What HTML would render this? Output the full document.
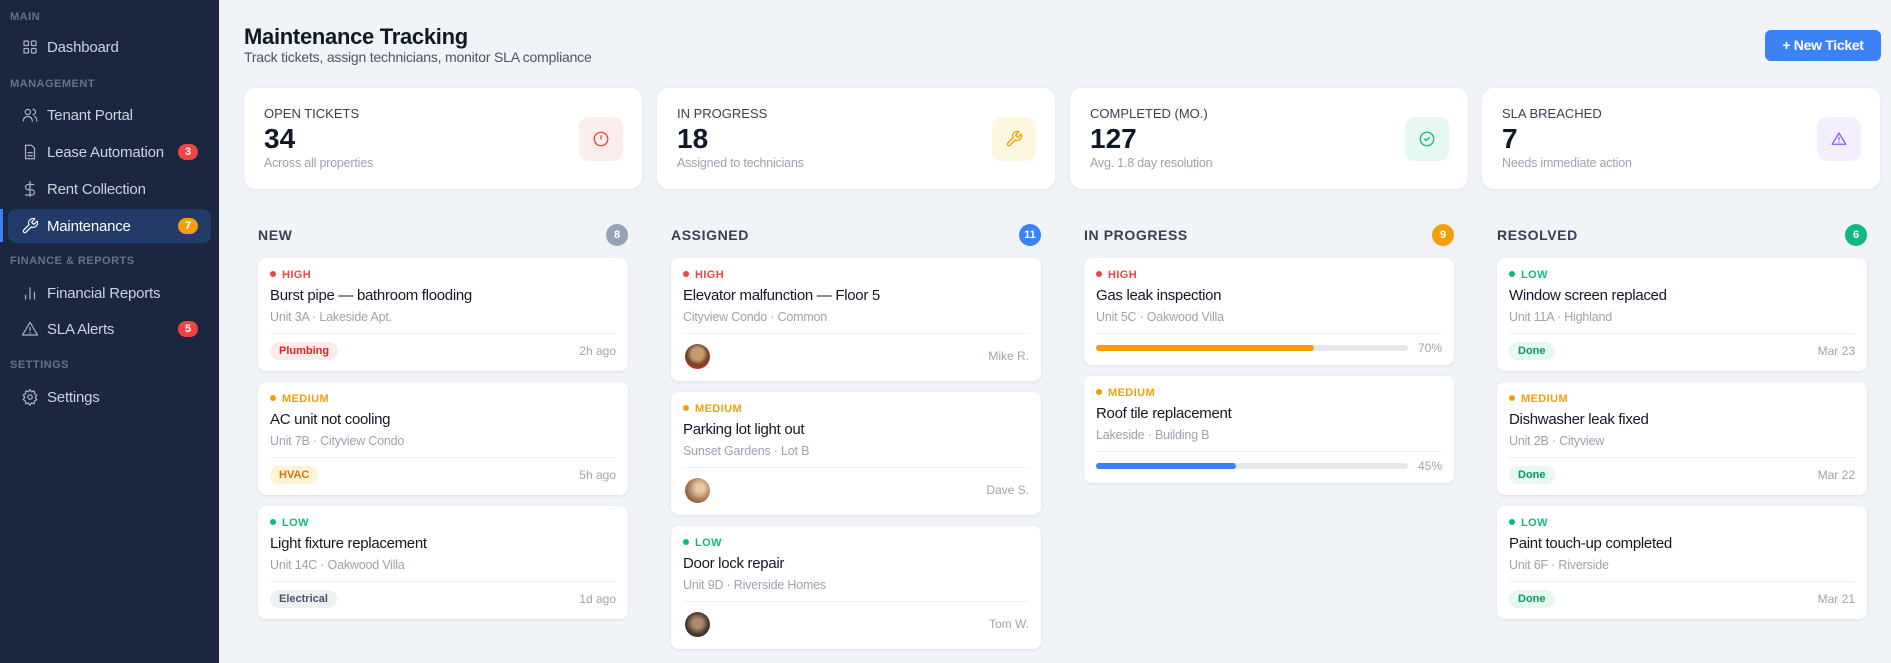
<!DOCTYPE html>
<html><head><meta charset="utf-8">
<style>
*{box-sizing:border-box;margin:0;padding:0}
body{width:1891px;height:663px;overflow:hidden;background:#f0f3f8;font-family:"Liberation Sans",sans-serif;position:relative}
.sb{position:absolute;left:0;top:0;width:219px;height:663px;background:#1b2641}
.sec{position:absolute;left:10px;font-size:11px;font-weight:bold;color:#66728c;letter-spacing:.5px}
.it{position:absolute;left:8px;width:203px;height:34px;display:flex;align-items:center;color:#cbd3e0;font-size:15px;border-radius:8px;letter-spacing:-.2px}
.it svg{position:absolute;left:13px;width:18px;height:18px;fill:none;stroke:#aab4c6;stroke-width:1.6;stroke-linecap:round;stroke-linejoin:round}
.it span{position:absolute;left:39px}
.it.act{background:#233b69;color:#fff}
.it.act svg{stroke:#fff}
.bar{position:absolute;left:0;top:209px;width:3px;height:33px;background:#3b82f6}
.bd{position:absolute;right:13px;width:20px;height:16px;border-radius:8px;color:#fff;font-size:11px;font-weight:bold;text-align:center;line-height:16px}
h1{position:absolute;left:244px;top:24px;font-size:22px;color:#111827;font-weight:bold;letter-spacing:-.3px}
.subt{position:absolute;left:244px;top:49px;font-size:14px;color:#4b5563;letter-spacing:-.2px}
.btn{position:absolute;left:1765px;top:30px;width:116px;height:31px;background:#3b82f6;border-radius:6px;color:#fff;font-size:14px;font-weight:bold;text-align:center;line-height:31px;letter-spacing:-.3px}
.st{position:absolute;top:88px;width:398px;height:101px;background:#fff;border-radius:12px;box-shadow:0 1px 3px rgba(0,0,0,.06)}
.st .l{position:absolute;left:20px;top:18px;font-size:13px;color:#374151}
.st .n{position:absolute;left:20px;top:35px;font-size:28px;font-weight:bold;color:#111827}
.st .s{position:absolute;left:20px;top:68px;font-size:12.5px;color:#9ca3af;letter-spacing:-.2px}
.st .ic{position:absolute;right:19px;top:29px;width:44px;height:44px;border-radius:10px;display:flex;align-items:center;justify-content:center}
.st .ic svg{width:18px;height:18px;fill:none;stroke-width:1.8;stroke-linecap:round;stroke-linejoin:round}
.col{position:absolute;top:224px;width:370px}
.ch{height:22px;position:relative;margin-bottom:12px}
.ch b{position:absolute;left:0;top:3px;font-size:14px;color:#374151;letter-spacing:.6px}
.ch i{position:absolute;right:0;top:0;width:22px;height:22px;border-radius:11px;color:#fff;font-style:normal;font-size:11px;font-weight:bold;text-align:center;line-height:22px}
.cd{background:#fff;border-radius:8px;padding:10px 12px 3px;margin-bottom:11px;box-shadow:0 1px 3px rgba(0,0,0,.08)}
.pr{height:14px;line-height:14px;font-size:11px;font-weight:bold;letter-spacing:.4px}
.pr:before{content:"";display:inline-block;width:6px;height:6px;border-radius:3px;background:currentColor;margin-right:6px;vertical-align:1px}
.h{color:#ef4444}.m{color:#f59e0b}.lo{color:#10b981}
.t{margin-top:4px;line-height:20px;font-size:15px;color:#111827;letter-spacing:-.3px}
.u{margin-top:3px;line-height:16px;font-size:12.5px;color:#9ca3af;padding-bottom:8px;border-bottom:1px solid #eef0f3;letter-spacing:-.2px}
.f{height:34px;display:flex;align-items:center;justify-content:space-between;font-size:12px;color:#9ca3af}
.f.a{height:44px}
.f.p{height:28px}
.tg{padding:3px 9px;border-radius:10px;font-size:11px;font-weight:bold}
.av{width:25px;height:25px;border-radius:13px;margin-left:2px}
.tr{flex:1;height:6px;background:#e5e7eb;border-radius:3px;margin-right:10px;position:relative}
.tr div{position:absolute;left:0;top:0;height:6px;border-radius:3px}
</style></head><body>
<div class="sb">
<div class="sec" style="top:11px">MAIN</div>
<div class="it" style="top:30px"><svg viewBox="0 0 24 24"><rect x="4" y="4" width="6" height="6" rx="1"/><rect x="14" y="4" width="6" height="6" rx="1"/><rect x="4" y="14" width="6" height="6" rx="1"/><rect x="14" y="14" width="6" height="6" rx="1"/></svg><span>Dashboard</span></div>
<div class="sec" style="top:78px">MANAGEMENT</div>
<div class="it" style="top:98px"><svg viewBox="0 0 24 24"><circle cx="9" cy="8" r="3.5"/><path d="M3 20c0-4 3-6 6-6s6 2 6 6M16 4.5a3.5 3.5 0 0 1 0 7M18 14c2 .8 3 3 3 6"/></svg><span>Tenant Portal</span></div>
<div class="it" style="top:135px"><svg viewBox="0 0 24 24"><path d="M6 3h8l4 4v14H6z"/><path d="M9 13h6M9 17h6"/></svg><span>Lease Automation</span><div class="bd" style="background:#ef4444">3</div></div>
<div class="it" style="top:172px"><svg viewBox="0 0 24 24"><path d="M12 2v20M17 6H9.5a3.5 3.5 0 0 0 0 7h5a3.5 3.5 0 0 1 0 7H6"/></svg><span>Rent Collection</span></div>
<div class="bar"></div>
<div class="it act" style="top:209px"><svg viewBox="0 0 24 24"><path d="M14.7 6.3a1 1 0 0 0 0 1.4l1.6 1.6a1 1 0 0 0 1.4 0l3.8-3.8a6 6 0 0 1-7.9 7.9l-6.9 6.9a2.1 2.1 0 0 1-3-3l6.9-6.9a6 6 0 0 1 7.9-7.9z"/></svg><span>Maintenance</span><div class="bd" style="background:#f59e0b">7</div></div>
<div class="sec" style="top:255px">FINANCE &amp; REPORTS</div>
<div class="it" style="top:276px"><svg viewBox="0 0 24 24"><path d="M6 20v-5M12 20V5M18 20v-9"/></svg><span>Financial Reports</span></div>
<div class="it" style="top:312px"><svg viewBox="0 0 24 24"><path d="M12 3 2 20h20z"/><path d="M12 10v4M12 17v.5"/></svg><span>SLA Alerts</span><div class="bd" style="background:#ef4444">5</div></div>
<div class="sec" style="top:359px">SETTINGS</div>
<div class="it" style="top:380px"><svg viewBox="0 0 24 24"><circle cx="12" cy="12" r="3"/><path d="M12 2l2 3 3.5-1 .5 3.5 3 2-2 3 2 3-3 2-.5 3.5-3.5-1-2 3-2-3-3.5 1-.5-3.5-3-2 2-3-2-3 3-2L6.5 4 10 5z"/></svg><span>Settings</span></div>
</div>

<h1>Maintenance Tracking</h1>
<div class="subt">Track tickets, assign technicians, monitor SLA compliance</div>
<div class="btn">+ New Ticket</div>

<div class="st" style="left:244px"><div class="l">OPEN TICKETS</div><div class="n">34</div><div class="s">Across all properties</div><div class="ic" style="background:#fdeeee"><svg viewBox="0 0 24 24" stroke="#ef4444"><circle cx="12" cy="12" r="9"/><path d="M12 8v4"/></svg></div></div>
<div class="st" style="left:657px"><div class="l">IN PROGRESS</div><div class="n">18</div><div class="s">Assigned to technicians</div><div class="ic" style="background:#fef7e0"><svg viewBox="0 0 24 24" stroke="#f59e0b"><path d="M14.7 6.3a1 1 0 0 0 0 1.4l1.6 1.6a1 1 0 0 0 1.4 0l3.8-3.8a6 6 0 0 1-7.9 7.9l-6.9 6.9a2.1 2.1 0 0 1-3-3l6.9-6.9a6 6 0 0 1 7.9-7.9z"/></svg></div></div>
<div class="st" style="left:1070px"><div class="l">COMPLETED (MO.)</div><div class="n">127</div><div class="s">Avg. 1.8 day resolution</div><div class="ic" style="background:#e7f8f0"><svg viewBox="0 0 24 24" stroke="#10b981"><circle cx="12" cy="12" r="9"/><path d="M9 12l2 2 4-4"/></svg></div></div>
<div class="st" style="left:1482px"><div class="l">SLA BREACHED</div><div class="n">7</div><div class="s">Needs immediate action</div><div class="ic" style="background:#f3effe"><svg viewBox="0 0 24 24" stroke="#8b5cf6"><path d="M12 4 3 19h18z"/><path d="M12 10v3M12 16v.3"/></svg></div></div>

<div class="col" style="left:258px">
<div class="ch"><b>NEW</b><i style="background:#94a3b8">8</i></div>
<div class="cd"><div class="pr h">HIGH</div><div class="t">Burst pipe — bathroom flooding</div><div class="u">Unit 3A · Lakeside Apt.</div><div class="f"><span class="tg" style="background:#fdecec;color:#dc2626">Plumbing</span><span>2h ago</span></div></div>
<div class="cd"><div class="pr m">MEDIUM</div><div class="t">AC unit not cooling</div><div class="u">Unit 7B · Cityview Condo</div><div class="f"><span class="tg" style="background:#fef3d7;color:#d97706">HVAC</span><span>5h ago</span></div></div>
<div class="cd"><div class="pr lo">LOW</div><div class="t">Light fixture replacement</div><div class="u">Unit 14C · Oakwood Villa</div><div class="f"><span class="tg" style="background:#eef0f4;color:#475569">Electrical</span><span>1d ago</span></div></div>
</div>

<div class="col" style="left:671px">
<div class="ch"><b>ASSIGNED</b><i style="background:#3b82f6">11</i></div>
<div class="cd"><div class="pr h">HIGH</div><div class="t">Elevator malfunction — Floor 5</div><div class="u">Cityview Condo · Common</div><div class="f a"><div class="av" style="background:radial-gradient(circle at 50% 40%,#c89a70 30%,#6b4424 55%,#c92b22 75%)"></div><span>Mike R.</span></div></div>
<div class="cd"><div class="pr m">MEDIUM</div><div class="t">Parking lot light out</div><div class="u">Sunset Gardens · Lot B</div><div class="f a"><div class="av" style="background:radial-gradient(circle at 60% 40%,#e8c9a0 20%,#a07050 60%,#6b4a35)"></div><span>Dave S.</span></div></div>
<div class="cd"><div class="pr lo">LOW</div><div class="t">Door lock repair</div><div class="u">Unit 9D · Riverside Homes</div><div class="f a"><div class="av" style="background:radial-gradient(circle at 50% 45%,#b08a6a 25%,#3f3a32 60%,#2a2d2a)"></div><span>Tom W.</span></div></div>
</div>

<div class="col" style="left:1084px">
<div class="ch"><b>IN PROGRESS</b><i style="background:#f59e0b">9</i></div>
<div class="cd"><div class="pr h">HIGH</div><div class="t">Gas leak inspection</div><div class="u">Unit 5C · Oakwood Villa</div><div class="f p"><div class="tr"><div style="width:70%;background:#f59e0b"></div></div><span>70%</span></div></div>
<div class="cd"><div class="pr m">MEDIUM</div><div class="t">Roof tile replacement</div><div class="u">Lakeside · Building B</div><div class="f p"><div class="tr"><div style="width:45%;background:#3b82f6"></div></div><span>45%</span></div></div>
</div>

<div class="col" style="left:1497px">
<div class="ch"><b>RESOLVED</b><i style="background:#10b981">6</i></div>
<div class="cd"><div class="pr lo">LOW</div><div class="t">Window screen replaced</div><div class="u">Unit 11A · Highland</div><div class="f"><span class="tg" style="background:#e7f8ef;color:#059669">Done</span><span>Mar 23</span></div></div>
<div class="cd"><div class="pr m">MEDIUM</div><div class="t">Dishwasher leak fixed</div><div class="u">Unit 2B · Cityview</div><div class="f"><span class="tg" style="background:#e7f8ef;color:#059669">Done</span><span>Mar 22</span></div></div>
<div class="cd"><div class="pr lo">LOW</div><div class="t">Paint touch-up completed</div><div class="u">Unit 6F · Riverside</div><div class="f"><span class="tg" style="background:#e7f8ef;color:#059669">Done</span><span>Mar 21</span></div></div>
</div>
</body></html>
